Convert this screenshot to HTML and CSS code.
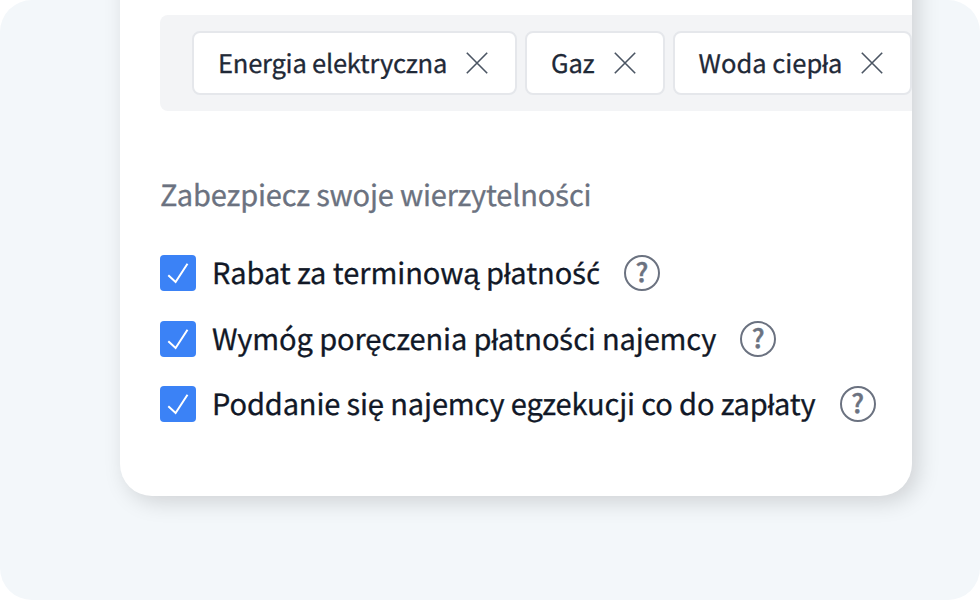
FILE: index.html
```html
<!DOCTYPE html>
<html lang="pl">
<head>
<meta charset="utf-8">
<title>Zabezpieczenia</title>
<link rel="stylesheet" href="styles.css">
</head>
<body>
<main class="stage">
  <section class="card">
    <div class="tags">
      <span class="tag tag-long"><span>Energia elektryczna</span><svg class="close" viewBox="0 0 22 22"><path d="M.8 .8L21.2 21.2M21.2 .8L.8 21.2"/></svg></span>
      <span class="tag"><span>Gaz</span><svg class="close" viewBox="0 0 22 22"><path d="M.8 .8L21.2 21.2M21.2 .8L.8 21.2"/></svg></span>
      <span class="tag tag-last"><span>Woda ciepła</span><svg class="close" viewBox="0 0 22 22"><path d="M.8 .8L21.2 21.2M21.2 .8L.8 21.2"/></svg></span>
    </div>
    <h2 class="title">Zabezpiecz swoje wierzytelno<span class="acute">ś</span>ci</h2>
    <ul class="options">
      <li class="option"><span class="box"><svg viewBox="0 0 36 36"><path d="M8.3 20.2L15.6 27L27.5 8.7"/></svg></span><span class="label label-first">Rabat za terminową płatno<span class="acute">ść</span></span><span class="help"><span>?</span></span></li>
      <li class="option"><span class="box"><svg viewBox="0 0 36 36"><path d="M8.3 20.2L15.6 27L27.5 8.7"/></svg></span><span class="label">Wymóg poręczenia płatno<span class="acute">ś</span>ci najemcy</span><span class="help"><span>?</span></span></li>
      <li class="option"><span class="box"><svg viewBox="0 0 36 36"><path d="M8.3 20.2L15.6 27L27.5 8.7"/></svg></span><span class="label">Poddanie się najemcy egzekucji co do zapłaty</span><span class="help"><span>?</span></span></li>
    </ul>
  </section>
</main>
</body>
</html>
```
FILE: styles.css
```css
* { box-sizing: border-box; }
body { margin: 0; background: #fff; font-family: "Noto Sans CJK JP", sans-serif; color: #111827; text-rendering: geometricPrecision; }
.stage { width: 980px; height: 600px; padding-left: 120px; background: #f3f7fa; border-radius: 32px; overflow: hidden; }
.card { width: 792px; height: 536px; margin-top: -40px; padding: 55px 0 0 40px; background: #fff; border-radius: 0 0 32px 32px; box-shadow: 6px 6px 22px rgba(0,0,0,.15); overflow: hidden; }
.tags { display: flex; gap: 8px; height: 96px; padding: 16px 0 16px 32px; background: #f3f4f6; border-radius: 8px 0 0 8px; }
.tag { flex: none; display: flex; align-items: center; gap: 19px; height: 64px; padding: 0 27px 0 24px; border: 2px solid #e5e7eb; border-radius: 8px; background: #fff; font-size: 25.5px; letter-spacing: -.18px; line-height: 58px; white-space: nowrap; color: #1f2937; -webkit-text-stroke: .3px; }
.tag-long { letter-spacing: -.22px; }
.tag-last { letter-spacing: 0; }
.close { width: 22px; height: 22px; fill: none; stroke: #4b5563; stroke-width: 1.6; }
.title { margin: 61px 0 0; font-size: 29px; letter-spacing: -.18px; font-weight: 400; line-height: 44px; color: #6b7280; -webkit-text-stroke: .3px; }
.options { margin: 39px 0 0; padding: 0; list-style: none; }
.option { display: flex; align-items: center; height: 36px; margin-bottom: 30px; white-space: nowrap; font-size: 29px; letter-spacing: -.12px; }
.option:nth-child(2) { margin-bottom: 29px; }
.label { margin-top: -3px; line-height: 44px; -webkit-text-stroke: .3px; }
.label-first { letter-spacing: -.05px; }
.acute { font-family: "Noto Sans", sans-serif; line-height: 1; }
.box { width: 36px; height: 36px; margin-right: 16px; border-radius: 4px; background: #3b82f6; }
.box svg { display: block; fill: none; stroke: #fff; stroke-width: 2; }
.help { display: grid; place-items: center; width: 36px; height: 36px; margin-left: 24px; padding-bottom: 2px; border: 2px solid #6b7280; border-radius: 50%; line-height: 30px; font-size: 26px; font-weight: 500; color: #6b7280; -webkit-text-stroke: .5px; }
```
